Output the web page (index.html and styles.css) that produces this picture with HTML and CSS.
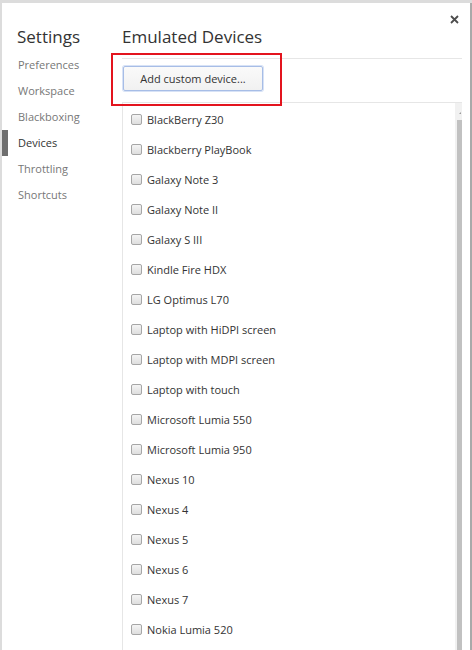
FILE: index.html
```html
<!DOCTYPE html>
<html>
<head>
<meta charset="utf-8">
<link rel="stylesheet" href="styles.css">
</head>
<body>
<div class="dialog">
  <aside class="sidebar">
    <h1 class="title">Settings</h1>
    <nav class="nav">
      <div class="nav-item">Preferences</div>
      <div class="nav-item">Workspace</div>
      <div class="nav-item">Blackboxing</div>
      <div class="nav-item selected">Devices</div>
      <div class="nav-item">Throttling</div>
      <div class="nav-item">Shortcuts</div>
    </nav>
  </aside>
  <main class="main">
    <h2 class="title">Emulated Devices</h2>
    <div class="toolbar">
      <button class="btn">Add custom device...</button>
    </div>
    <div class="list-wrap">
      <ul class="list">
        <li><span class="cb"></span>BlackBerry Z30</li>
        <li><span class="cb"></span>Blackberry PlayBook</li>
        <li><span class="cb"></span>Galaxy Note 3</li>
        <li><span class="cb"></span>Galaxy Note II</li>
        <li><span class="cb"></span>Galaxy S III</li>
        <li><span class="cb"></span>Kindle Fire HDX</li>
        <li><span class="cb"></span>LG Optimus L70</li>
        <li><span class="cb"></span>Laptop with HiDPI screen</li>
        <li><span class="cb"></span>Laptop with MDPI screen</li>
        <li><span class="cb"></span>Laptop with touch</li>
        <li><span class="cb"></span>Microsoft Lumia 550</li>
        <li><span class="cb"></span>Microsoft Lumia 950</li>
        <li><span class="cb"></span>Nexus 10</li>
        <li><span class="cb"></span>Nexus 4</li>
        <li><span class="cb"></span>Nexus 5</li>
        <li><span class="cb"></span>Nexus 6</li>
        <li><span class="cb"></span>Nexus 7</li>
        <li><span class="cb"></span>Nokia Lumia 520</li>
      </ul>
      <div class="scrollbar"><span class="arrow"></span><span class="thumb"></span></div>
    </div>
  </main>
  <svg class="close" width="9" height="9" viewBox="0 0 9 9"><path d="M1 1L8 8M8 1L1 8" stroke="#4d4d4d" stroke-width="1.8"/></svg>
  <div class="highlight"></div>
</div>
</body>
</html>
```
FILE: styles.css
```css
* { box-sizing: border-box; }
html, body { margin: 0; padding: 0; height: 100%; overflow: hidden; }
body {
  background: #dcdcdc;
  font-family: "Open Sans", "Noto Sans", sans-serif;
  padding: 3px 0 0 1px;
}
.dialog {
  position: relative;
  margin-left: 1px;
  width: 470px;
  height: 647px;
  background: #fff;
  border-right: 2px solid #a9a9a9;
  display: flex;
  overflow: hidden;
}
.sidebar {
  width: 120px;
  flex: none;
}
.title {
  margin: 0;
  font-weight: 400;
  font-size: 17px;
  line-height: 24px;
  padding-top: 22px;
  height: 49px;
  color: #333;
}
.sidebar .title { padding-left: 15px; }
.nav-item {
  height: 26px;
  line-height: 26px;
  padding-left: 16px;
  font-size: 11px;
  color: #777;
}
.nav-item.selected {
  color: #333;
  border-left: 6px solid #6e6e6e;
  padding-left: 10px;
}
.main {
  flex: 1;
  margin-right: 8px;
  display: flex;
  flex-direction: column;
}
.toolbar {
  margin-top: 6px;
  border-top: 1px solid #e6e6e6;
  padding: 7px 0 11px 1px;
}
.btn {
  font-family: inherit;
  font-size: 11px;
  color: #333;
  height: 25px;
  width: 140px;
  padding: 0;
  background: linear-gradient(#fafafa, #f1f1f1);
  border: 1px solid #a7bde6;
  box-shadow: 0 0 0 1px #d7e2f6;
  border-radius: 2px;
}
.list-wrap {
  position: relative;
  flex: 1;
  border-top: 1px solid #e6e6e6;
  border-left: 1px solid #e6e6e6;
  display: flex;
  min-height: 0;
}
.list {
  list-style: none;
  margin: 0;
  padding: 1px 0 0;
  flex: 1;
}
.list li {
  height: 30px;
  display: flex;
  align-items: center;
  font-size: 11px;
  color: #333;
  padding-left: 8px;
}
.cb {
  width: 11px;
  height: 11px;
  border: 1px solid #a6a6a6;
  border-radius: 2px;
  background: linear-gradient(#f4f4f4, #dedede);
  margin-right: 5px;
  flex: none;
}
.scrollbar {
  width: 7px;
  flex: none;
  background: #f1f1f1;
  display: flex;
  flex-direction: column;
  align-items: flex-end;
}
.arrow {
  margin-top: 9px;
  width: 0; height: 0;
  border-left: 2px solid transparent;
  border-bottom: 2px solid #9a9a9a;
  margin-right: 1px;
}
.thumb {
  margin-top: 6px;
  width: 5px;
  flex: 1;
  background: #c1c1c1;
}
.close {
  position: absolute;
  top: 12px;
  left: 448px;
}
.highlight {
  position: absolute;
  left: 109px;
  top: 50px;
  width: 171px;
  height: 53px;
  border: 2px solid #e3141e;
}
```
